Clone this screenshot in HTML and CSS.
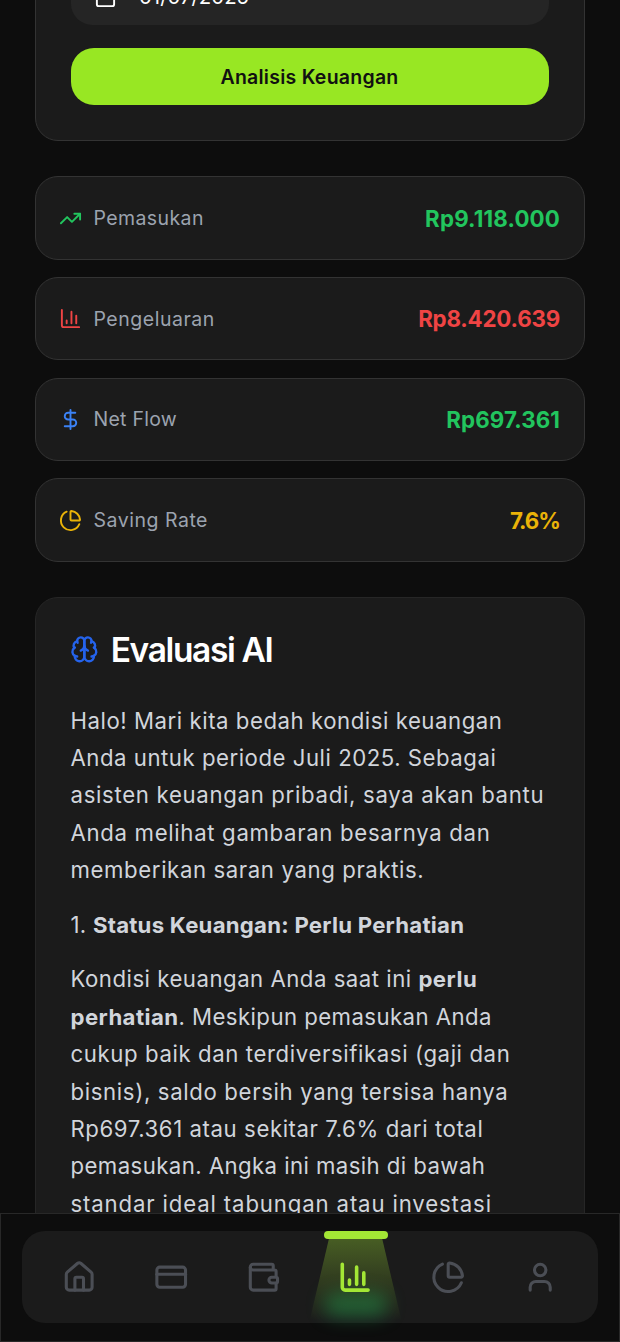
FILE: index.html
```html
<!DOCTYPE html>
<html lang="id">
<head>
<meta charset="utf-8">
<title>Analisis Keuangan</title>
<link rel="stylesheet" href="styles.css">
</head>
<body>
<svg class="sprite" aria-hidden="true">
  <symbol id="chart" viewBox="0 0 24 24"><path d="M3 3v16a2 2 0 0 0 2 2h16M18 17V9M13 17V5M8 17v-3"/></symbol>
  <symbol id="pie" viewBox="0 0 24 24"><path d="M21 12c.552 0 1.005-.449.95-.998a10 10 0 0 0-8.953-8.951c-.55-.055-.998.398-.998.95v8a1 1 0 0 0 1 1z"/><path d="M21.21 15.89A10 10 0 1 1 8 2.83"/></symbol>
</svg>
<main class="page">
  <section class="card form">
    <div class="field">
      <svg class="icon" viewBox="0 0 24 24"><path d="M8 2v4M16 2v4M3 10h18"/><rect x="3" y="4" width="18" height="18" rx="2"/></svg>
      <span class="date">01/07/2025</span>
    </div>
    <button class="submit">Analisis Keuangan</button>
  </section>
  <section class="stats">
    <div class="card stat">
      <svg class="icon green" viewBox="0 0 24 24"><path d="M16 7h6v6"/><path d="m22 7-8.5 8.5-5-5L2 17"/></svg>
      <span class="label l1">Pemasukan</span><strong class="value v1 green">Rp9.118.000</strong>
    </div>
    <div class="card stat">
      <svg class="icon red"><use href="#chart"/></svg>
      <span class="label l2">Pengeluaran</span><strong class="value v2 red">Rp8.420.639</strong>
    </div>
    <div class="card stat">
      <svg class="icon blue" viewBox="0 0 24 24"><path d="M12 2v20M17 5H9.5a3.5 3.5 0 0 0 0 7h5a3.5 3.5 0 0 1 0 7H6"/></svg>
      <span class="label l3">Net Flow</span><strong class="value v3 green">Rp697.361</strong>
    </div>
    <div class="card stat">
      <svg class="icon yellow"><use href="#pie"/></svg>
      <span class="label l4">Saving Rate</span><strong class="value v4 yellow">7.6%</strong>
    </div>
  </section>
  <section class="card evaluation">
    <h2 class="title">
      <svg class="brain" viewBox="0 0 24 24"><path d="M12 5a3 3 0 1 0-5.997.125 4 4 0 0 0-2.526 5.77 4 4 0 0 0 .556 6.588A4 4 0 1 0 12 18Z"/><path d="M12 5a3 3 0 1 1 5.997.125 4 4 0 0 1 2.526 5.77 4 4 0 0 1-.556 6.588A4 4 0 1 1 12 18Z"/><path d="M15 13a4.5 4.5 0 0 1-3-4 4.5 4.5 0 0 1-3 4M17.599 6.5a3 3 0 0 0 .399-1.375M6.003 5.125A3 3 0 0 0 6.401 6.5M3.477 10.896a4 4 0 0 1 .585-.396M19.938 10.5a4 4 0 0 1 .585.396M6 18a4 4 0 0 1-1.967-.516M19.967 17.484A4 4 0 0 1 18 18"/></svg>
      <span>Evaluasi AI</span>
    </h2>
    <p class="text">
      <span class="line p1">Halo! Mari kita bedah kondisi keuangan</span>
      <span class="line p2">Anda untuk periode Juli 2025. Sebagai</span>
      <span class="line p3">asisten keuangan pribadi, saya akan bantu</span>
      <span class="line p4">Anda melihat gambaran besarnya dan</span>
      <span class="line p5">memberikan saran yang praktis.</span>
    </p>
    <p class="text"><span class="line p6">1. <b>Status Keuangan: Perlu Perhatian</b></span></p>
    <p class="text">
      <span class="line p7">Kondisi keuangan Anda saat ini <b>perlu</b></span>
      <span class="line p8"><b>perhatian</b>. Meskipun pemasukan Anda</span>
      <span class="line p9">cukup baik dan terdiversifikasi (gaji dan</span>
      <span class="line p10">bisnis), saldo bersih yang tersisa hanya</span>
      <span class="line p11">Rp697.361 atau sekitar 7.6% dari total</span>
      <span class="line p12">pemasukan. Angka ini masih di bawah</span>
      <span class="line p13">standar ideal tabungan atau investasi</span>
    </p>
  </section>
</main>
<nav class="navbar">
  <div class="tabs">
    <a class="tab"><svg viewBox="0 0 24 24"><path d="M15 21v-8a1 1 0 0 0-1-1h-4a1 1 0 0 0-1 1v8"/><path d="M3 10a2 2 0 0 1 .709-1.528l7-5.999a2 2 0 0 1 2.582 0l7 5.999A2 2 0 0 1 21 10v9a2 2 0 0 1-2 2H5a2 2 0 0 1-2-2z"/></svg></a>
    <a class="tab"><svg viewBox="0 0 24 24"><rect x="2" y="5" width="20" height="14" rx="2"/><path d="M2 10h20"/></svg></a>
    <a class="tab"><svg viewBox="0 0 24 24"><path d="M19 7V4a1 1 0 0 0-1-1H5a2 2 0 0 0 0 4h15a1 1 0 0 1 1 1v4h-3a2 2 0 0 0 0 4h3a1 1 0 0 0 1-1v-2a1 1 0 0 0-1-1"/><path d="M3 5v14a2 2 0 0 0 2 2h15a1 1 0 0 0 1-1v-4"/></svg></a>
    <a class="tab active"><i class="beam"></i><i class="glow"></i><i class="lamp"></i><svg><use href="#chart"/></svg></a>
    <a class="tab"><svg><use href="#pie"/></svg></a>
    <a class="tab"><svg viewBox="0 0 24 24"><circle cx="12" cy="7" r="4"/><path d="M19 21v-2a4 4 0 0 0-4-4H9a4 4 0 0 0-4 4v2"/></svg></a>
  </div>
</nav>
</body>
</html>
```
FILE: styles.css
```css
* { box-sizing: border-box; }
body { margin: 0; height: 1342px; overflow: hidden; background: #0d0d0d; color: #fff; font-family: Inter, "Open Sans", sans-serif; }
svg { fill: none; stroke: currentColor; stroke-width: 2; stroke-linecap: round; stroke-linejoin: round; flex: none; overflow: visible; }
.sprite { display: none; }
.page { height: 1342px; padding: 0 35.5px 0 34.5px; overflow: hidden; }
.card { background: #1b1b1b; border: 1.4px solid #333; border-radius: 23px; }
.form { margin-top: -69px; height: 210px; padding: 36px 35px; display: flex; flex-direction: column; gap: 22.6px; }
.field { height: 57.4px; flex: none; border-radius: 21.5px; background: #252525; display: flex; align-items: center; padding-left: 23px; gap: 22.5px; }
.icon { width: 23px; height: 23px; }
.date { font-size: 20.4px; line-height: 28px; padding-top: 1px; }
.submit { height: 57.4px; flex: none; border: 0; border-radius: 23px; padding: 1px 0 0; background: #98e723; color: #111; font: 560 19.5px/28px Inter, sans-serif; letter-spacing: .25px; }
.stats { margin-top: 35.4px; display: flex; flex-direction: column; gap: 17.3px; }
.stat { height: 83.4px; padding: 0 23.5px 0 23px; display: flex; align-items: center; }
.label { margin-left: 12px; font-size: 19.5px; color: #9ca3af; white-space: nowrap; }
.l1 { letter-spacing: .4px; }
.l2 { letter-spacing: .52px; }
.l3 { letter-spacing: .25px; }
.l4 { letter-spacing: .52px; }
.value { margin-left: auto; font-size: 22.3px; font-weight: 700; white-space: nowrap; }
.v1 { letter-spacing: .16px; }
.v2 { letter-spacing: -.18px; }
.v3 { letter-spacing: .1px; }
.v4 { letter-spacing: -1px; }
.green { color: #22c55e; }
.red { color: #ef4444; }
.blue { color: #3b82f6; }
.yellow { color: #eab308; }
.evaluation { margin-top: 35.2px; height: 900px; padding: 32.6px 35px; border-color: #262626; }
.title { margin: 0 0 33px; height: 38px; display: flex; align-items: center; gap: 12px; font-size: 33.5px; line-height: 38px; font-weight: 640; letter-spacing: -1.35px; }
.brain { width: 28.7px; height: 28.7px; margin-left: -.5px; color: #2563eb; }
.text { margin: 0 0 17.2px; font-size: 22.2px; line-height: 37.4px; color: #d1d5db; }
.line { display: block; white-space: nowrap; }
.text b { font-weight: 700; }
.p1 { letter-spacing: .54px; }
.p2 { letter-spacing: .52px; }
.p3 { letter-spacing: .68px; }
.p4 { letter-spacing: .67px; }
.p5 { letter-spacing: .6px; }
.p6 { letter-spacing: .24px; }
.p7 { letter-spacing: .5px; }
.p8 { letter-spacing: .43px; }
.p9 { letter-spacing: .6px; }
.p10 { letter-spacing: .64px; }
.p11 { letter-spacing: .58px; }
.p12 { letter-spacing: .42px; }
.p13 { letter-spacing: .85px; }
.navbar { position: fixed; left: 0; right: 0; bottom: 0; height: 129px; padding: 17px 21px 18px; background: #0d0d0d; border: 1.4px solid #282828; }
.tabs { height: 92px; padding: 0 12px 0 11px; display: grid; grid-template-columns: repeat(6, 1fr); border-radius: 23px; background: #1b1b1b; }
.tab { position: relative; display: flex; align-items: center; justify-content: center; color: #4b4e55; }
.tab svg { position: relative; width: 34.4px; height: 34.4px; stroke-width: 2.15; }
.tab.active { color: #a3e635; }
.tab.active svg { stroke-width: 2.5; }
.lamp { position: absolute; top: 0; left: calc(50% - 32px); width: 64px; height: 8px; border-radius: 4px; background: #a3e635; }
.beam { position: absolute; top: 4px; left: calc(50% - 46px); width: 92px; height: 86px; clip-path: polygon(22% 0, 78% 0, 100% 100%, 0 100%); background: linear-gradient(rgba(163,230,53,.34), rgba(163,230,53,0)); }
.glow { position: absolute; top: 62px; left: calc(50% - 32px); width: 64px; height: 24px; border-radius: 12px; background: rgba(34,197,94,.36); filter: blur(9px); }
```
